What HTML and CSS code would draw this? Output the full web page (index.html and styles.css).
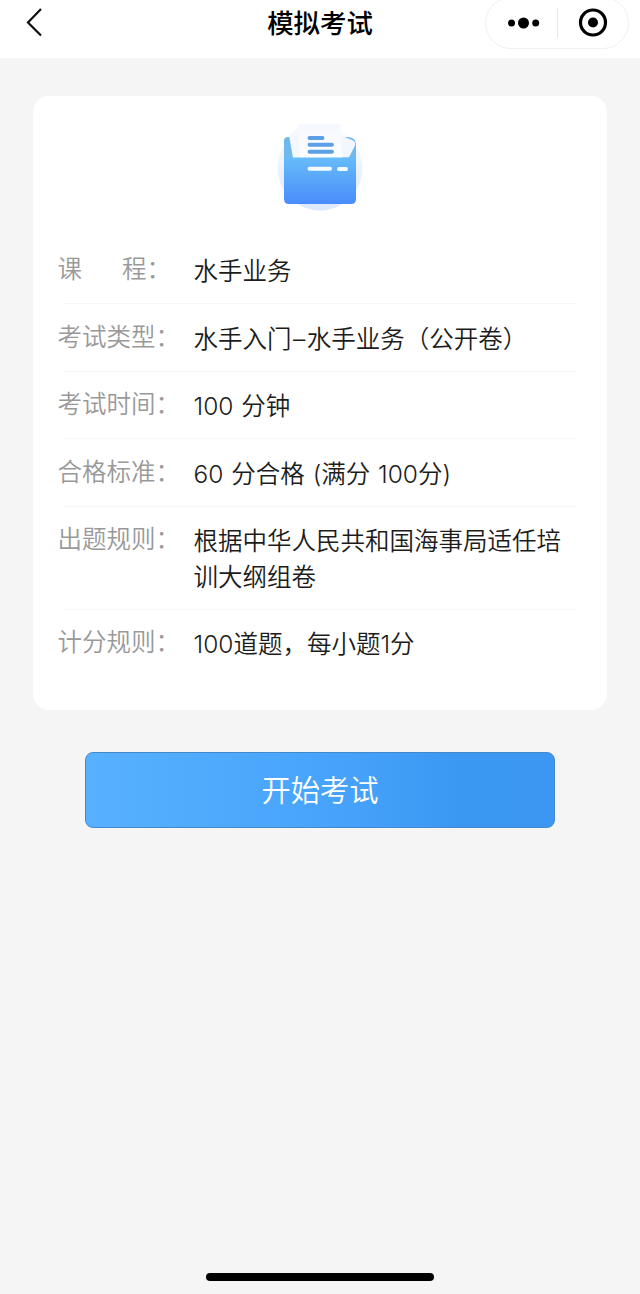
FILE: index.html
```
<!DOCTYPE html>
<html lang="zh-CN">

<head>
    <meta charset="utf-8">
    <title>模拟考试</title>
    <link rel="stylesheet" href="styles.css">
</head>

<body>
    <div class="navbar">
        <svg class="back" width="20" height="32" viewBox="0 0 20 32">
            <path d="M17 3 L4 16.500 L17 29.500" fill="none" stroke="#111" stroke-width="2.2" />
        </svg>
        <div class="title">模拟考试</div>
        <div class="capsule">
            <svg width="142" height="50" viewBox="0 0 142 50">
                <circle cx="25.500" cy="25" r="3.500" />
                <circle cx="37.500" cy="25" r="5.500" />
                <circle cx="49.700" cy="25" r="3.500" />
                <path d="M71.500 10V40" stroke="#e6e6e6" />
                <circle cx="107" cy="24.500" r="12.500" fill="none" stroke="#000" stroke-width="3.200" />
                <circle cx="107" cy="24.500" r="5" />
            </svg>
        </div>
    </div>

    <div class="card">
        <svg class="folder" width="120" height="115" viewBox="0 0 120 115">
            <defs>
                <linearGradient id="front" x1="0" y1="0" x2="0" y2="1">
                    <stop offset="0" stop-color="#66bcfa" />
                    <stop offset="1" stop-color="#4a8cfa" />
                </linearGradient>
                <linearGradient id="circle" x1="0" y1="0" x2="0" y2="1">
                    <stop offset="0" stop-color="#fdfdff" />
                    <stop offset="1" stop-color="#dce8fc" />
                </linearGradient>
                <linearGradient id="paper" x1="0" y1="0" x2="0" y2="1">
                    <stop offset="0" stop-color="#f5f8ff" />
                    <stop offset="1" stop-color="#fdfeff" />
                </linearGradient>
            </defs>
            <circle cx="60" cy="63" r="42.500" fill="url(#circle)" />
            <path d="M24 60V36q0-4 4-4h60q8 1 8 7v21z" fill="#70b9ee" />
            <path d="M80 30l13 5.500q3 1.500 2 5l-6 12H72z" fill="#f1f6ff" />
            <path d="M29 30l12-9 4 32H33z" fill="#f3f7fe" />
            <path d="M40 19h37q4 0 4 4l1 31H40l-2-32q0-3 2-3z" fill="url(#paper)" />
            <path d="M49.500 33h13M49.500 39.700H72M49.500 46.700H72" stroke="#5b9fe5" stroke-width="3.900" stroke-linecap="round" />
            <path d="M24 52.500h72V94q0 5-5 5H29q-5 0-5-5z" fill="url(#front)" />
            <path d="M49.500 63.700H70M79 64h7" stroke="#f5fbff" stroke-width="4" stroke-linecap="round" />
        </svg>
        <div class="row">
            <div class="label"><span class="spread">课</span>程：</div>
            <div class="value">水手业务</div>
        </div>
        <div class="row">
            <div class="label">考试类型：</div>
            <div class="value">水手入门<span class="dash">–</span>水手业务（公开卷）</div>
        </div>
        <div class="row">
            <div class="label">考试时间：</div>
            <div class="value">100 分钟</div>
        </div>
        <div class="row">
            <div class="label">合格标准：</div>
            <div class="value">60 分合格 (满分 100分)</div>
        </div>
        <div class="row two-lines">
            <div class="label">出题规则：</div>
            <div class="value">根据中华人民共和国海事局适任培训大纲组卷</div>
        </div>
        <div class="row">
            <div class="label">计分规则：</div>
            <div class="value">100道题，每小题1分</div>
        </div>
    </div>

    <button class="start">开始考试</button>

    <div class="home-bar"></div>
</body>

</html>
```
FILE: styles.css
```
* {
    box-sizing: border-box;
}

body {
    margin: 0;
    height: 1294px;
    display: flex;
    flex-direction: column;
    align-items: center;
    background-color: #f5f5f5;
    font-family: Inter, "Noto Sans CJK SC", sans-serif;
    overflow: hidden;
}

.navbar {
    width: 100%;
    height: 58px;
    flex: none;
    display: grid;
    grid-template-columns: 1fr auto 1fr;
    background-color: #fff;
}

.back {
    margin: 6px 0 0 24px;
}

.title {
    font-size: 26.4px;
    font-weight: 500;
    line-height: 46px;
    color: #000;
}

.capsule {
    justify-self: end;
    width: 144px;
    height: 52px;
    margin: -3px 11px 0 0;
    border: 1px solid #f1f1f1;
    border-radius: 26px;
}

.capsule svg {
    display: block;
}

.card {
    width: 574px;
    height: 614px;
    flex: none;
    margin-top: 38px;
    padding: 9px 31px 0 25px;
    background-color: #fff;
    border-radius: 16px;
}

.folder {
    display: block;
    margin: 0 0 16px 202px;
}

.row {
    display: flex;
    padding: 16.800px 0 15px;
    background: linear-gradient(#f7f7f7, #f7f7f7) 5px 100% / 100% 1px no-repeat;
    font-size: 24.500px;
    line-height: 36px;
}

.row.two-lines {
    padding-top: 15.500px;
}

.row:last-child {
    background: none;
}

.label {
    width: 136px;
    flex: none;
    margin-top: -2px;
    margin-left: -0.500px;
    font-weight: 350;
    color: #999;
    white-space: nowrap;
}

.spread {
    margin-right: 40px;
}

.value {
    flex: 1;
    font-weight: 350;
    color: #1c1c1c;
    word-spacing: 1px;
}

.dash {
    margin: 0 1.500px;
}

.start {
    width: 470px;
    height: 76px;
    flex: none;
    margin-top: 42px;
    padding: 0 0 4px;
    border: 1px solid #4389c9;
    border-radius: 8px;
    background: linear-gradient(90deg, #58b1ff, #48a4fb 50%, #3b98f2 80%, #3b97f1);
    color: #fff;
    font-family: inherit;
    font-size: 29.300px;
    font-weight: 350;
}

.home-bar {
    width: 228px;
    height: 8px;
    flex: none;
    margin-top: auto;
    margin-bottom: 13px;
    border-radius: 4px;
    background-color: #000;
}
```
